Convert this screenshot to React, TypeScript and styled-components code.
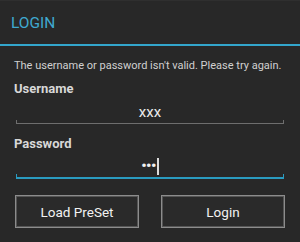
import React from "react";
import styled, { createGlobalStyle } from "styled-components";

const Global = createGlobalStyle`
  html, body { margin: 0; padding: 0; background: #282828; }
  body { font-family: Roboto, "Liberation Sans", sans-serif; width: 300px; height: 242px; overflow: hidden; }
`;

const Dialog = styled.div`
  width: 300px;
  height: 242px;
  background: #282828;
  display: flex;
  flex-direction: column;
  border-top: 1px solid #2f2f2f;
  box-sizing: border-box;
`;

const Header = styled.div`
  height: 45px;
  border-bottom: 2px solid #33a6cc;
  display: flex;
  align-items: center;
  padding-left: 11px;
  box-sizing: border-box;
`;

const Title = styled.h1`
  margin: 0;
  font-size: 15.5px;
  font-weight: 400;
  color: #3fa9d0;
  padding-top: 1px;
`;

const Body = styled.div`
  display: flex;
  flex-direction: column;
  padding: 13px 16px 0 14px;
`;

const Message = styled.p`
  margin: 0;
  font-size: 11px;
  color: #d0d0d0;
  line-height: 14px;
`;

const Label = styled.label<{ $top: number }>`
  font-size: 13px;
  font-weight: 700;
  color: #d8d8d8;
  line-height: 16px;
  margin-top: ${(p) => p.$top}px;
`;

const Field = styled.div<{ $active?: boolean }>`
  position: relative;
  margin-left: 2px;
  height: ${(p) => (p.$active ? 23 : 24)}px;
  margin-top: 2px;
  display: flex;
  align-items: center;
  justify-content: center;
  border-bottom: ${(p) => (p.$active ? "2px solid #2a9bc0" : "1px solid #6e6e6e")};
  &::after {
    content: "";
    position: absolute;
    left: 0;
    right: 0;
    bottom: 0;
    height: 3px;
    border-left: 1px solid ${(p) => (p.$active ? "#2a9bc0" : "#6e6e6e")};
    border-right: 1px solid ${(p) => (p.$active ? "#2a9bc0" : "#6e6e6e")};
  }
`;

const Value = styled.span`
  font-size: 15px;
  color: #ececec;
  display: flex;
  align-items: center;
  padding-top: 1px;
`;

const Dots = styled.span`
  font-size: 15px;
  color: #f0f0f0;
  letter-spacing: -0.5px;
  font-weight: 700;
`;

const Cursor = styled.span`
  display: inline-block;
  width: 2px;
  height: 17px;
  background: #dcdcdc;
  margin-left: 1px;
`;

const Buttons = styled.div`
  display: flex;
  gap: 22px;
  padding: 0 15px;
  margin-top: 16px;
`;

const Button = styled.button`
  flex: 1;
  height: 33px;
  background: #2a2a2a;
  border: 1px solid #8c8c8c;
  box-shadow: inset 0 0 0 1px #555;
  color: #f2f2f2;
  font-family: Roboto, "Liberation Sans", sans-serif;
  font-size: 13.5px;
  padding: 0;
`;

export default function App() {
  return (
    <>
      <Global />
      <Dialog>
        <Header>
          <Title>LOGIN</Title>
        </Header>
        <Body>
          <Message>The username or password isn't valid. Please try again.</Message>
          <Label $top={8}>Username</Label>
          <Field>
            <Value>xxx</Value>
          </Field>
          <Label $top={12}>Password</Label>
          <Field $active>
            <Value>
              <Dots>•••</Dots>
              <Cursor />
            </Value>
          </Field>
        </Body>
        <Buttons>
          <Button>Load PreSet</Button>
          <Button>Login</Button>
        </Buttons>
      </Dialog>
    </>
  );
}
